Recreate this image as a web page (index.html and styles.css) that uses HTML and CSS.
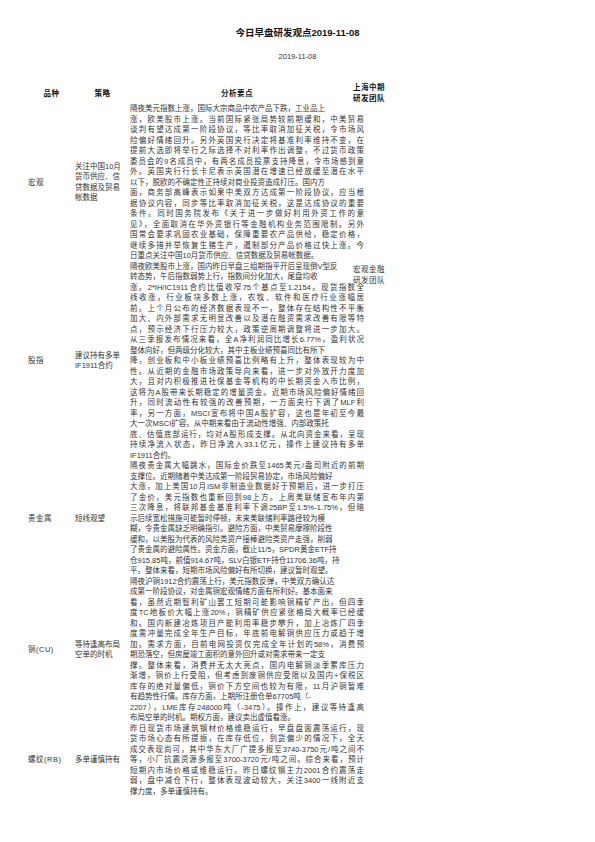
FILE: index.html
```html
<!DOCTYPE html>
<html lang="zh-CN">
<head>
<meta charset="utf-8">
<title>今日早盘研发观点2019-11-08</title>
<link rel="stylesheet" href="styles.css">
</head>
<body>
<h1 class="title">今日早盘研发观点2019-11-08</h1>
<p class="date">2019-11-08</p>
<table class="report">
  <colgroup>
    <col class="c-kind">
    <col class="c-strategy">
    <col class="c-analysis">
    <col class="c-team">
  </colgroup>
  <thead>
    <tr>
      <th>品种</th>
      <th>策略</th>
      <th>分析要点</th>
      <th>上海中期<br>研发团队</th>
    </tr>
  </thead>
  <tbody>
    <tr>
      <td class="kind">宏观</td>
      <td class="strategy">关注中国10月<br>货币供应、信<br>贷数据及贸易<br>帐数据</td>
      <td class="analysis">
        <div class="p">隔夜美元指数上涨，国际大宗商品中农产品下跌，工业品上</div>
        <div class="j">涨，欧美股市上涨。当前国际紧张局势较前期缓和，中美贸易<br>谈判有望达成第一阶段协议，等比率取消加征关税，令市场风<br>险偏好情绪回升。另外英国央行决定将基准利率维持不变，在<br>提前大选即将举行之际选择不对利率作出调整，不过货币政策<br>委员会的9名成员中，有两名成员投票支持降息，令市场感到意<br>外。英国央行行长卡尼表示英国潜在增速已经放缓至潜在水平</div>
        <div class="p">以下，脱欧的不确定性正持续对商业投资造成打压。国内方</div>
        <div class="j">面，商务部高峰表示如果中美双方达成第一阶段协议，应当根<br>据协议内容，同步等比率取消加征关税，这是达成协议的重要<br>条件。同时国务院发布《关于进一步做好利用外资工作的意<br>见》，全面取消在华外资银行等金融机构业务范围限制。另外<br>国常会要求巩固农业基础，保障重要农产品供给，稳定价格，<br>继续多措并举恢复生猪生产，遏制部分产品价格过快上涨。今</div>
        <div class="p">日重点关注中国10月货币供应、信贷数据及贸易帐数据。</div>
      </td>
      <td class="team" rowspan="2">宏观金融<br>研发团队</td>
    </tr>
    <tr>
      <td class="kind">股指</td>
      <td class="strategy">建议持有多单<br>IF1911合约</td>
      <td class="analysis">
        <div class="p">隔夜欧美股市上涨，国内昨日早盘三组期指平开后呈现倒V型反<br>转态势，午后指数弱势上行，指数间分化加大，尾盘均收</div>
        <div class="j">涨。2*IH/IC1911合约比值收窄75个基点至1.2154。现货指数全<br>线收涨，行业板块多数上涨，农牧、软件和医疗行业涨幅居<br>前。上个月公布的经济数据表现不一，整体存在结构性不平衡<br>加大、内外部需求无明显改善以及潜在融资需求改善有限等特<br>点，预示经济下行压力较大，政策逆周期调整将进一步加大。<br>从三季报发布情况来看，全A净利润同比增长6.77%，盈利状况</div>
        <div class="p">整体向好，但两级分化较大，其中主板业绩预喜同比有所下</div>
        <div class="j">降，创业板和中小板业绩预喜比例略有上升，整体表现较为中<br>性。从近期的金融市场政策导向来看，进一步对外放开力度加<br>大，且对内积极推进社保基金等机构的中长期资金入市比例，<br>这将为A股带来长期稳定的增量资金。近期市场风险偏好情绪回<br>升，同时流动性有较强的改善预期，一方面央行下调了MLF利<br>率，另一方面，MSCI宣布将中国A股扩容，这也是年初至今最</div>
        <div class="p">大一次MSCI扩容。从中期来看由于流动性增强、内部政策托</div>
        <div class="j">底、估值底部运行，均对A股形成支撑。从北向资金来看，呈现<br>持续净流入状态，昨日净流入33.1亿元，操作上建议持有多单</div>
        <div class="p">IF1911合约。</div>
      </td>
    </tr>
    <tr>
      <td class="kind">贵金属</td>
      <td class="strategy">短线观望</td>
      <td class="analysis">
        <div class="j">隔夜贵金属大幅跳水，国际金价跌至1465美元/盎司附近的前期</div>
        <div class="p">支撑位。近期随着中美达成第一阶段贸易协定，市场风险偏好</div>
        <div class="j">大涨，加上美国10月ISM非制造业数据好于预期后，进一步打压<br>了金价，美元指数也重新回到98上方。上周美联储宣布年内第<br>三次降息，将联邦基金基准利率下调25BP至1.5%-1.75%，但暗</div>
        <div class="p">示后续宽松措施可能暂时停顿，未来美联储利率路径较为模<br>糊，令贵金属缺乏明确指引。避险方面，中美贸易摩擦阶段性<br>缓和，以美股为代表的风险类资产接棒避险类资产走强，削弱<br>了贵金属的避险属性。资金方面，截止11/5，SPDR黄金ETF持<br>仓915.85吨，前值914.67吨，SLV白银ETF持仓11706.36吨，持<br>平。整体来看，短期市场风险偏好有所切换，建议暂时观望。</div>
      </td>
    </tr>
    <tr>
      <td class="kind">铜(CU)</td>
      <td class="strategy">等待逢高布局<br>空单的时机</td>
      <td class="analysis">
        <div class="p">隔夜沪铜1912合约震荡上行，美元指数反弹，中美双方确认达<br>成第一阶段协议，对金属铜宏观情绪方面有所利好。基本面来</div>
        <div class="j">看，虽然近期智利矿山罢工短期可能影响铜精矿产出，但四季<br>度TC地板价大幅上涨20%，铜精矿供应紧张格局大概率已经缓<br>和。国内新建冶炼项目产能利用率稳步攀升，加上冶炼厂四季<br>度需冲量完成全年生产目标，年底前电解铜供应压力或趋于增<br>加。需求方面，目前电网投资仅完成全年计划的58%，消费预</div>
        <div class="p">期恐落空，但房屋竣工面积的意外回升或对需求带来一定支</div>
        <div class="j">撑。整体来看，消费并无太大亮点，国内电解铜淡季累库压力<br>渐增，铜价上行受阻，但考虑到废铜供应受限以及国内+保税区<br>库存的绝对量偏低，铜价下方空间也较为有限，11月沪铜暂难</div>
        <div class="p">有趋势性行情。库存方面，上期所注册仓单67705吨（-</div>
        <div class="j">2207），LME库存248000吨（-3475）。操作上，建议等待逢高</div>
        <div class="p">布局空单的时机。期权方面，建议卖出虚值看涨。</div>
      </td>
    </tr>
    <tr>
      <td class="kind">螺纹(RB)</td>
      <td class="strategy">多单谨慎持有</td>
      <td class="analysis">
        <div class="j">昨日现货市场建筑钢材价格维稳运行，早盘盘面震荡运行，现<br>货市场心态有所提振，在库存低位，到货偏少的情况下，全天<br>成交表现尚可，其中华东大厂广提多报至3740-3750元/吨之间不<br>等，小厂抗震资源多报至3700-3720元/吨之间。综合来看，预计<br>短期内市场价格或维稳运行。昨日螺纹钢主力2001合约震荡走<br>弱，盘中减仓下行，整体表现波动较大，关注3400一线附近支</div>
        <div class="p">撑力度，多单谨慎持有。</div>
      </td>
    </tr>
  </tbody>
</table>
</body>
</html>
```

FILE: styles.css
```css
html, body {
  margin: 0;
  padding: 0;
  background: #ffffff;
}

body {
  width: 595px;
  font-family: "Liberation Sans", "Noto Sans CJK SC", sans-serif;
  color: #333333;
}

.title {
  margin: 0;
  padding-top: 27px;
  text-align: center;
  font-size: 9.5px;
  line-height: 12px;
  font-weight: bold;
  color: #111111;
}

.date {
  margin: 13px 0 0;
  text-align: center;
  font-size: 7.5px;
  line-height: 10px;
}

.report {
  margin: 20px 0 0 28px;
  border-collapse: collapse;
  border-spacing: 0;
  table-layout: fixed;
  width: 366px;
}

.c-kind { width: 47px; }
.c-strategy { width: 55px; }
.c-analysis { width: 214px; }
.c-team { width: 50px; }

.report th {
  padding: 0;
  height: 22px;
  font-size: 7.5px;
  line-height: 11px;
  font-weight: bold;
  letter-spacing: 0.5px;
  text-align: center;
  vertical-align: middle;
  color: #111111;
}

.report td {
  padding: 0;
  vertical-align: middle;
  font-size: 7.5px;
}

.kind {
  padding-left: 2px;
  letter-spacing: 0.5px;
  line-height: 10px;
}

.strategy {
  line-height: 10.5px;
}

.analysis .p,
.analysis .j {
  width: 234px;
  font-size: 7.5px;
  line-height: 10.5px;
}

.analysis .p {
  text-align: left;
}

.analysis .j {
  text-align: justify;
  text-align-last: justify;
}

.report td.team {
  padding-bottom: 15px;
  text-align: center;
  letter-spacing: 0.5px;
  line-height: 11px;
}
```
